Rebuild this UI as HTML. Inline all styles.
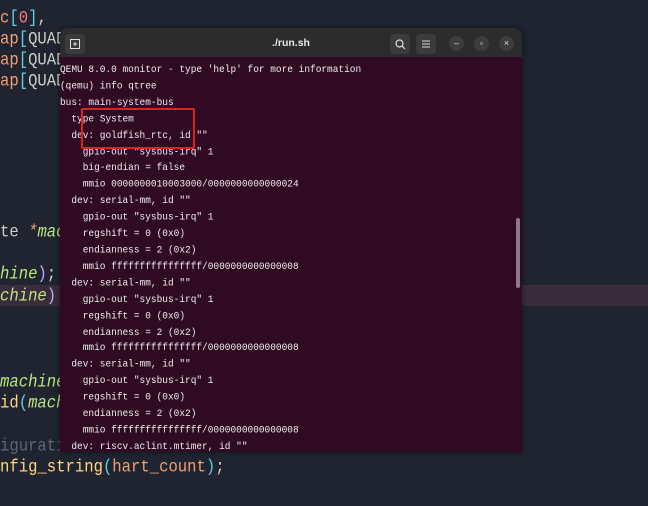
<!DOCTYPE html>
<html><head><style>
body{margin:0;width:648px;height:506px;background:#1f2430;overflow:hidden;position:relative;font-family:"Liberation Mono",monospace}
.ed{position:absolute;left:0;font-size:15.6px;color:#cbccc6;white-space:pre;line-height:20px;transform:scaleY(1.12);transform-origin:left top}
.hl{position:absolute;left:0;top:285px;width:648px;height:21px;background:#3a2b3d}
.term{position:absolute;left:60px;top:28px;width:462px;height:424px;background:#2f0a22;border-radius:8px 8px 0 0;overflow:hidden;box-shadow:0 0 6px rgba(0,0,0,.5)}
.hd{height:29px;background:#2c2c2c;position:relative}
.title{position:absolute;left:0;right:0;top:9px;text-align:center;color:#e8e8e8;font:bold 10.5px "Liberation Sans",sans-serif}
.btn{position:absolute;top:6px;width:20px;height:20px;background:#3b3b3b;border-radius:4px}
.cb{position:absolute;top:8px;width:15px;height:15px;border-radius:50%;background:#3d3d3d;color:#ddd;font:9px "Liberation Sans";text-align:center;line-height:15px}
.tx{position:absolute;left:0;top:33.5px;color:#eee;font-size:9.47px;line-height:14.91px;white-space:pre;transform:scaleY(1.1);transform-origin:left top}
.red{position:absolute;left:81px;top:108px;width:110px;height:37px;border:2px solid #e0201c;border-radius:2px}
.sb{position:absolute;left:456px;top:190px;width:4px;height:70px;background:#8a7a85;border-radius:2px}
</style></head><body>
<div class="ed" style="top:7px"><span style="color:#f29e74">c</span><span style="color:#5ccfe6">[</span><span style="color:#f27983">0</span><span style="color:#5ccfe6">]</span>,</div>
<div class="ed" style="top:28px"><span style="color:#f29e74">ap</span><span style="color:#5ccfe6">[</span>QUAD</div>
<div class="ed" style="top:49px"><span style="color:#f29e74">ap</span><span style="color:#5ccfe6">[</span>QUAD</div>
<div class="ed" style="top:70px"><span style="color:#f29e74">ap</span><span style="color:#5ccfe6">[</span>QUAD</div>
<div class="ed" style="top:221px">te <i style="color:#f29e74">*</i><i style="color:#bae67e">machine</i></div>
<div class="hl"></div>
<div class="ed" style="top:263px"><i style="color:#bae67e">hine</i><span style="color:#c3a6ff">)</span>;</div>
<div class="ed" style="top:285px"><i style="color:#bae67e">chine</i><span style="color:#c3a6ff">)</span></div>
<div class="ed" style="top:371px"><i style="color:#bae67e">machine</i></div>
<div class="ed" style="top:392px"><span style="color:#ffd580">id</span><span style="color:#5ccfe6">(</span><i style="color:#bae67e">machine</i></div>
<div class="ed" style="top:435px;color:#5c6773">iguration</div>
<div class="ed" style="top:456px"><span style="color:#ffd580">nfig_string</span><span style="color:#5ccfe6">(</span><span style="color:#f29e74">hart_count</span><span style="color:#5ccfe6">)</span>;</div>
<div class="term">
<div class="hd">
<div class="btn" style="left:5px"><svg width="20" height="20"><rect x="5.5" y="5.5" width="9" height="9" fill="none" stroke="#ddd"/><path d="M10 8v4M8 10h4" stroke="#ddd"/></svg></div>
<div class="title">./run.sh</div>
<div class="btn" style="left:330px"><svg width="20" height="20"><circle cx="9.5" cy="9.5" r="3.5" fill="none" stroke="#ddd" stroke-width="1.2"/><path d="M12 12l3 3" stroke="#ddd" stroke-width="1.2"/></svg></div>
<div class="btn" style="left:356px"><svg width="20" height="20"><path d="M6 7h8M6 10h8M6 13h8" stroke="#ddd"/></svg></div>
<div class="cb" style="left:389px">–</div>
<div class="cb" style="left:414px">▫</div>
<div class="cb" style="left:439px">×</div>
</div>
<div class="tx">QEMU 8.0.0 monitor - type 'help' for more information
(qemu) info qtree
bus: main-system-bus
  type System
  dev: goldfish_rtc, id ""
    gpio-out "sysbus-irq" 1
    big-endian = false
    mmio 0000000010003000/0000000000000024
  dev: serial-mm, id ""
    gpio-out "sysbus-irq" 1
    regshift = 0 (0x0)
    endianness = 2 (0x2)
    mmio ffffffffffffffff/0000000000000008
  dev: serial-mm, id ""
    gpio-out "sysbus-irq" 1
    regshift = 0 (0x0)
    endianness = 2 (0x2)
    mmio ffffffffffffffff/0000000000000008
  dev: serial-mm, id ""
    gpio-out "sysbus-irq" 1
    regshift = 0 (0x0)
    endianness = 2 (0x2)
    mmio ffffffffffffffff/0000000000000008
  dev: riscv.aclint.mtimer, id ""</div>
<div class="sb"></div>
</div>
<div class="red"></div>
</body></html>
